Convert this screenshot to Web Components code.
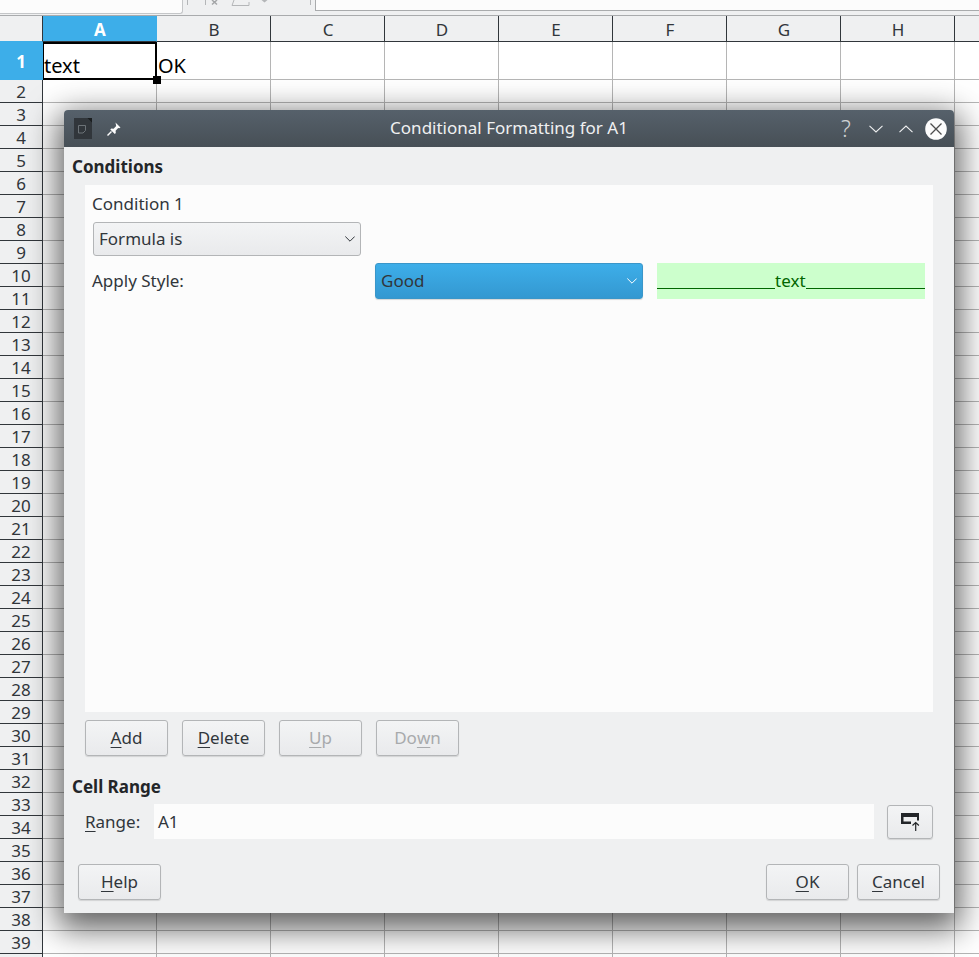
<!DOCTYPE html>
<html lang="en"><head><meta charset="utf-8"><title>Conditional Formatting</title>
<style>html,body{margin:0;padding:0;width:979px;height:957px;overflow:hidden;background:#fff;font-family:"Noto Sans",sans-serif}</style>
</head><body>
<sheet-view></sheet-view>
<cf-dialog title="Conditional Formatting for A1"></cf-dialog>
<script>
function def(name, css, html){
  customElements.define(name, class extends HTMLElement{
    connectedCallback(){
      if(this.shadowRoot) return;
      const r=this.attachShadow({mode:'open'});
      r.innerHTML='<style>'+css+'</style>'+(typeof html==='function'?html(this):html);
    }
  });
}
def('app-toolbar',`
:host{display:flex;height:15px;background:#eff0f1;border-bottom:1px solid #a9abad;box-sizing:content-box;overflow:hidden}
.name{width:182px;height:13px;background:#fcfcfc;border:1px solid #c4c6c8;border-top:0;border-left:0;border-radius:0 0 3px 0;flex:none}
.tools{margin-left:4px;width:128px;height:15px;flex:none}
.tools svg{display:block}
.formula{flex:1;height:10px;background:#fcfcfc;border:1px solid #a9abad;border-top:0;border-right:0}
`,`<div class="name"></div><div class="tools"><svg width="128" height="15" viewBox="0 0 128 15"><g fill="none" stroke="#b4b6b8"><path d="M.5 0v5M18.500 0v5M123.500 0v5"/><path d="M25 0l5 4.500M30 0l-5 4.500" stroke="#a4a6a8" stroke-width="1.500"/><path d="M47 0l-2 5.500h17V2"/><path d="M74.500 0h6l-3 2.500z" fill="#b4b6b8" stroke="none"/></g></svg></div><div class="formula"></div>`);

def('sheet-view',`
:host{display:block;width:979px;font-family:"Noto Sans",sans-serif;color:#31363b}
.hrow{display:grid;grid-template-columns:43px repeat(8,114px) 1fr;height:26px}
.row{display:grid;grid-template-columns:43px repeat(8,114px) 1fr;height:23px}
.row.first{height:38px}
.h{box-sizing:border-box;background:#eff0f1;border-right:1px solid #31363b;border-bottom:1px solid #31363b;display:flex;align-items:center;justify-content:center;font-size:17px;line-height:1;padding:1px 0 0 1px}
.h.rn{padding-left:0}
.h.on{background:#3daee9;color:#fff;font-weight:700;border-right-color:#3daee9}
.h.corner{border-bottom-color:#3daee9}
.c{box-sizing:border-box;border-right:1px solid #b5b5b5;border-bottom:1px solid #b5b5b5;background:#fff}
.first .c{font-size:20px;color:#000;display:flex;align-items:flex-end;line-height:27px;padding-left:1px}
.first .c.sel{border:2px solid #000;border-left-width:1.5px;padding-left:0;line-height:24px;position:relative;z-index:2}
.grip{position:absolute;width:8px;height:8px;background:#000;right:-6px;bottom:-6px}
`,()=>{
  const cols='ABCDEFGH'.split('');
  let s='<app-toolbar></app-toolbar><div class="hrow"><div class="h corner"></div>'+cols.map((c,i)=>`<div class="h${i==0?' on':''}">${c}</div>`).join('')+'<div class="h" style="border-right:0"></div></div>';
  s+='<div class="row first"><div class="h on rn" style="border-bottom-color:#3daee9">1</div><div class="c sel">text<span class="grip"></span></div><div class="c">OK</div>'+'<div class="c"></div>'.repeat(6)+'<div class="c" style="border-right:0"></div></div>';
  for(let n=2;n<=40;n++){ s+=`<div class="row"><div class="h rn">${n<40?n:''}</div>`+'<div class="c"></div>'.repeat(8)+'<div class="c" style="border-right:0"></div></div>'; }
  return s;
});

def('title-bar',`
:host{display:flex;align-items:center;height:37px;flex:none;background:linear-gradient(#56616b,#474f56);border-radius:4px 4px 0 0;color:#eff0f1;font-size:17px}
.left{display:flex;align-items:center;gap:13px;padding-left:10px;width:160px;flex:none;box-sizing:border-box}
.t{flex:1;text-align:center;line-height:36px;height:37px;white-space:nowrap}
.right{display:flex;align-items:center;width:160px;flex:none;justify-content:flex-end;padding-right:7px;box-sizing:border-box}
.q{width:20px;text-align:center;font-size:23px;font-weight:300;line-height:37px;opacity:.8;margin-right:13px}
svg{display:block}
`,(el)=>`<div class="left">
<svg width="18" height="21" viewBox="0 0 18 21"><path d="M0 0h13l5 5v16H0z" fill="#31363b"/><path d="M13 0h5v5z" fill="#1b1e20"/><path d="M4.500 7.500h7v5l-2.500 2.500H4.500z" fill="none" stroke="#6c7378"/></svg>
<svg width="16" height="16" viewBox="0 0 16 16" style="margin-left:1px"><path d="M9.500 1.500l5 5-1.300.8-1-.2-2.600 2.600.2 2.300-1 1L4.300 8.500l1-1 2.300.2 2.600-2.600-.2-1z" fill="#fcfcfc"/><path d="M5.500 10.500L1.500 14.500" stroke="#fcfcfc" stroke-width="1.500"/></svg>
</div><div class="t">${el.getAttribute('text')}</div><div class="right">
<span class="q">?</span>
<svg width="14" height="8" viewBox="0 0 14 8" style="margin-right:16px"><path d="M.5 .8L7 7l6.500-6.200" fill="none" stroke="#eff0f1" stroke-width="1.100"/></svg>
<svg width="14" height="8" viewBox="0 0 14 8" style="margin-right:12px"><path d="M.5 7.200L7 1l6.500 6.200" fill="none" stroke="#eff0f1" stroke-width="1.100"/></svg>
<svg width="22" height="22" viewBox="0 0 22 22"><circle cx="11" cy="11" r="10.800" fill="#fcfcfc"/><path d="M5.500 5.500l11 11M16.500 5.500l-11 11" stroke="#4d4d4d" stroke-width="1.300"/></svg>
</div>`);

def('lo-button',`
:host{display:flex;align-items:center;justify-content:center;box-sizing:border-box;width:83px;height:36px;flex:none;border:1px solid #b3b5b7;border-radius:3px;background:linear-gradient(#f3f4f5,#e9eaec);box-shadow:0 1px 1px rgba(0,0,0,.12);font-size:17px;color:#31363b;line-height:22px;white-space:nowrap}
:host([disabled]){color:#a8aaac}
::slotted(u){text-underline-offset:3px;text-decoration-thickness:1px}
`,`<slot></slot>`);

def('lo-select',`
:host{display:flex;align-items:center;box-sizing:border-box;width:268px;flex:none;border:1px solid #b3b5b7;border-radius:3px;background:linear-gradient(#f3f4f5,#e9eaec);font-size:17px;color:#31363b;padding:0 5px;justify-content:space-between;white-space:nowrap}
:host([active]){background:linear-gradient(#3daee9,#3498d1);border-color:#3a96c9;box-shadow:0 1px 1px rgba(0,0,0,.15)}
svg{stroke:#31363b;display:block}
:host([active]) svg{stroke:#fff}
`,`<slot></slot><svg width="10" height="6" viewBox="0 0 10 6"><path d="M.3 .5L5 5.200 9.700 .5" fill="none" stroke-width="1"/></svg>`);

def('style-preview',`
:host{display:flex;align-items:center;width:268px;height:36px;flex:none;background:#ccffcc;color:#006600;font-size:17px;line-height:22px}
.l{height:1.500px;background:#006600;align-self:flex-end;margin-bottom:10px}
.a{flex:none;width:118px}
.b{flex:1}
span{flex:none}
`,`<div class="l a"></div><span><slot></slot></span><div class="l b"></div>`);

def('cf-dialog',`
:host{position:absolute;left:64px;top:110px;width:890px;height:803px;display:flex;flex-direction:column;background:#eff0f1;border-radius:4px 4px 0 0;box-shadow:0 10px 32px 6px rgba(0,0,0,.62);color:#31363b;font-family:"Noto Sans",sans-serif;font-size:17px;line-height:22px}
.body{flex:1;display:flex;flex-direction:column;padding:0 21px 13px 8px}
h2{font:700 17px/22px "Noto Sans",sans-serif;margin:0;color:#232629}
.h1{padding-top:9px;height:38px;box-sizing:border-box;flex:none}
.panel{margin-left:13px;height:527px;background:#fcfcfc;padding:8px 8px 0 7px;box-sizing:border-box;display:flex;flex-direction:column;flex:none}
.cond{height:22px;line-height:22px;flex:none}
lo-select.k{margin:7px 0 0 1px;height:34px}
.apply{display:flex;align-items:center;margin-top:7px;height:36px}
.apply .lab{width:283px;flex:none}
.apply lo-select{height:36px;margin-right:14px}
.btns{display:flex;gap:14px;margin:8px 0 0 13px;flex:none}
.h2{margin-top:20px;height:22px;flex:none}
.range{display:flex;align-items:center;margin:6px 0 0 13px;height:35px;flex:none}
.range .lab{width:69px;flex:none}
.inp{width:720px;height:35px;background:#fcfcfc;line-height:35px;padding-left:4px;box-sizing:border-box;flex:none}
.range lo-button{width:46px;height:34px;margin-left:13px}
.foot{display:flex;margin:25px -7px 0 6px;flex:none;align-items:center}
.sp{flex:1}
.foot lo-button+lo-button{margin-left:8px}
u{text-underline-offset:3px;text-decoration-thickness:1px}
svg{display:block}
`,(el)=>`<title-bar text="${el.getAttribute('title')}"></title-bar><div class="body">
<div class="h1"><h2>Conditions</h2></div>
<div class="panel"><div class="cond">Condition 1</div>
<lo-select class="k">Formula is</lo-select>
<div class="apply"><div class="lab">Apply Style:</div><lo-select active>Good</lo-select><style-preview>text</style-preview></div></div>
<div class="btns"><lo-button><u>A</u>dd</lo-button><lo-button><u>D</u>elete</lo-button><lo-button disabled><u>U</u>p</lo-button><lo-button disabled>Do<u>w</u>n</lo-button></div>
<div class="h2"><h2>Cell Range</h2></div>
<div class="range"><div class="lab"><u>R</u>ange:</div><div class="inp">A1</div><lo-button><svg width="19" height="18" viewBox="0 0 19 18"><path d="M0 0h18v7.500h-2V4H2.500v4.500H10V11H0z" fill="#232629"/><path d="M14.700 18V9.500M11.500 12.500l3.200-3 3.200 3" fill="none" stroke="#232629" stroke-width="1.200"/></svg></lo-button></div>
<div class="foot"><lo-button><u>H</u>elp</lo-button><div class="sp"></div><lo-button><u>O</u>K</lo-button><lo-button><u>C</u>ancel</lo-button></div>
</div>`);
</script>
</body></html>
